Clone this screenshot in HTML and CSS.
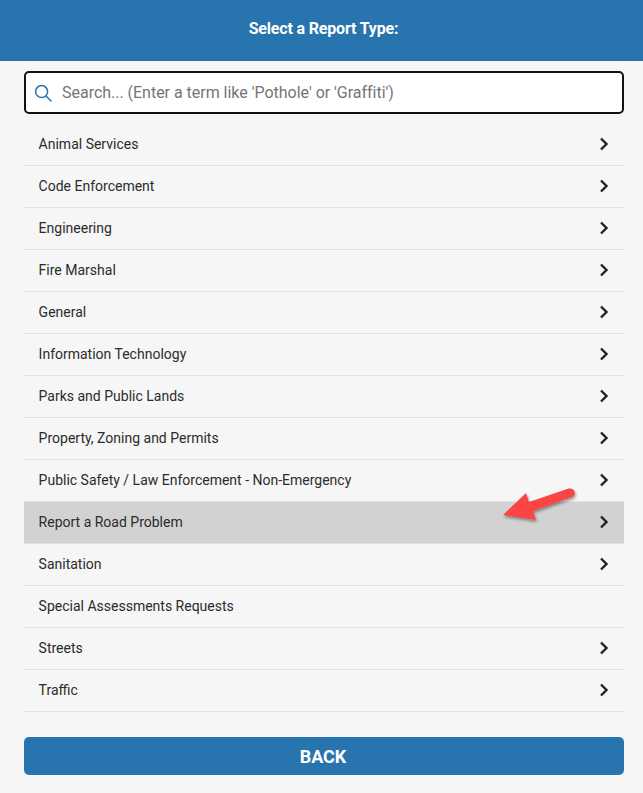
FILE: index.html
```html
<!DOCTYPE html>
<html lang="en">
<head>
<meta charset="utf-8">
<title>Select a Report Type</title>
<link rel="stylesheet" href="styles.css">
</head>
<body>
<header class="top-bar"><h1 class="top-title">Select a Report Type:</h1></header>
<main class="content">
  <div class="search">
    <svg class="search-icon" viewBox="0 0 18 18" width="18" height="18" aria-hidden="true"><circle cx="7.6" cy="7.6" r="6" fill="none" stroke="#2874ae" stroke-width="1.5"/><path d="M12 12l5 5" fill="none" stroke="#2874ae" stroke-width="1.5" stroke-linecap="round"/></svg>
    <span class="search-text">Search... (Enter a term like 'Pothole' or 'Graffiti')</span>
  </div>
  <ul class="list">
    <li class="row"><span>Animal Services</span><svg class="chev" viewBox="0 0 10 14" width="10" height="14"><path d="M2 1.5L7.5 7L2 12.5"/></svg></li>
    <li class="row"><span>Code Enforcement</span><svg class="chev" viewBox="0 0 10 14" width="10" height="14"><path d="M2 1.5L7.5 7L2 12.5"/></svg></li>
    <li class="row"><span>Engineering</span><svg class="chev" viewBox="0 0 10 14" width="10" height="14"><path d="M2 1.5L7.5 7L2 12.5"/></svg></li>
    <li class="row"><span>Fire Marshal</span><svg class="chev" viewBox="0 0 10 14" width="10" height="14"><path d="M2 1.5L7.5 7L2 12.5"/></svg></li>
    <li class="row"><span>General</span><svg class="chev" viewBox="0 0 10 14" width="10" height="14"><path d="M2 1.5L7.5 7L2 12.5"/></svg></li>
    <li class="row"><span>Information Technology</span><svg class="chev" viewBox="0 0 10 14" width="10" height="14"><path d="M2 1.5L7.5 7L2 12.5"/></svg></li>
    <li class="row"><span>Parks and Public Lands</span><svg class="chev" viewBox="0 0 10 14" width="10" height="14"><path d="M2 1.5L7.5 7L2 12.5"/></svg></li>
    <li class="row"><span>Property, Zoning and Permits</span><svg class="chev" viewBox="0 0 10 14" width="10" height="14"><path d="M2 1.5L7.5 7L2 12.5"/></svg></li>
    <li class="row"><span>Public Safety / Law Enforcement - Non-Emergency</span><svg class="chev" viewBox="0 0 10 14" width="10" height="14"><path d="M2 1.5L7.5 7L2 12.5"/></svg></li>
    <li class="row row-active"><span>Report a Road Problem</span><svg class="chev" viewBox="0 0 10 14" width="10" height="14"><path d="M2 1.5L7.5 7L2 12.5"/></svg></li>
    <li class="row"><span>Sanitation</span><svg class="chev" viewBox="0 0 10 14" width="10" height="14"><path d="M2 1.5L7.5 7L2 12.5"/></svg></li>
    <li class="row"><span>Special Assessments Requests</span></li>
    <li class="row"><span>Streets</span><svg class="chev" viewBox="0 0 10 14" width="10" height="14"><path d="M2 1.5L7.5 7L2 12.5"/></svg></li>
    <li class="row"><span>Traffic</span><svg class="chev" viewBox="0 0 10 14" width="10" height="14"><path d="M2 1.5L7.5 7L2 12.5"/></svg></li>
  </ul>
  <button class="back" type="button">BACK</button>
</main>
<svg class="callout" viewBox="0 0 80 50" width="80" height="50" aria-hidden="true">
  <defs><filter id="sh" x="-20%" y="-20%" width="150%" height="160%"><feDropShadow dx="1" dy="2" stdDeviation="1.6" flood-color="#000" flood-opacity="0.4"/></filter></defs>
  <path filter="url(#sh)" fill="#fb4444" d="M3 27L26 5L29 14L68 0.8C71 0 74.5 1.5 74.8 4.5C75 7 73.5 8.5 71.5 9.3L33 23L36 32Z"/>
</svg>
</body>
</html>
```

FILE: styles.css
```css
* { box-sizing: border-box; }
html, body { margin: 0; padding: 0; }
body {
  position: relative;
  width: 643px;
  height: 793px;
  overflow: hidden;
  background: #f6f6f6;
  font-family: Roboto, "Liberation Sans", sans-serif;
  color: #2b2b2b;
}
.top-bar {
  height: 61px;
  background: #2874ae;
  display: flex;
  align-items: center;
  justify-content: center;
  padding-bottom: 4px;
}
.top-title {
  margin: 0;
  font-size: 16px;
  font-weight: 700;
  letter-spacing: -0.17px;
  color: #fff;
  padding-left: 4px;
}
.content {
  padding: 10px 19px 0 24px;
  display: flex;
  flex-direction: column;
}
.search {
  height: 43px;
  background: #fff;
  border: 2px solid #111;
  border-radius: 5px;
  display: flex;
  align-items: center;
  padding-left: 8px;
  gap: 10px;
}
.search-icon { flex: none; }
.search-text {
  font-size: 16px;
  color: #757575;
  letter-spacing: -0.02px;
}
.list {
  list-style: none;
  margin: 10px 0 0;
  padding: 0;
}
.row {
  height: 42px;
  border-bottom: 1px solid #e2e2e2;
  display: flex;
  align-items: center;
  justify-content: space-between;
  padding: 0 15px 2px 14.6px;
  font-size: 14px;
}
.row-active { background: #d2d2d2; }
.chev {
  flex: none;
  fill: none;
  stroke: #212121;
  stroke-width: 2.4;
}
.back {
  margin-top: 25px;
  height: 38px;
  border: 0;
  border-radius: 5px;
  background: #2874ae;
  color: #fff;
  font-family: inherit;
  font-size: 18px;
  font-weight: 700;
  padding: 0 2px 0 0;
}
.callout {
  position: absolute;
  left: 500px;
  top: 488px;
}
```
